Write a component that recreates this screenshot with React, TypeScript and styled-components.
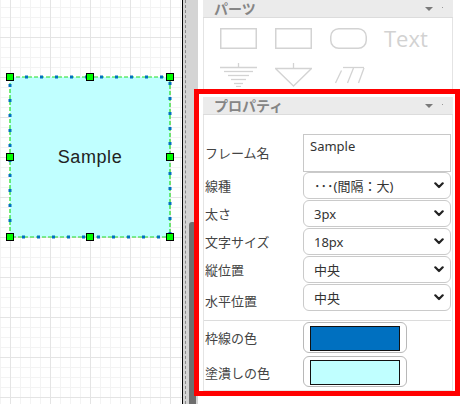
import React from "react";
import styled, { createGlobalStyle } from "styled-components";

const Global = createGlobalStyle`
  html, body { margin: 0; padding: 0; width: 465px; height: 404px; overflow: hidden; background: #fff; }
  * { box-sizing: border-box; }
`;

const Screen = styled.div`
  position: relative;
  display: flex;
  width: 465px;
  height: 404px;
  overflow: hidden;
  font-family: "Noto Sans", "Noto Sans CJK JP", sans-serif;
`;

const Canvas = styled.div`
  position: relative;
  flex: none;
  width: 183px;
  height: 100%;
  border-right: 1px solid #000;
  background-color: #fff;
  background-image:
    linear-gradient(to right, #e4e4e4 1px, transparent 1px),
    linear-gradient(to bottom, #e4e4e4 1px, transparent 1px),
    linear-gradient(to right, #f3f3f3 1px, transparent 1px),
    linear-gradient(to bottom, #f3f3f3 1px, transparent 1px);
  background-size: 40px 40px, 40px 40px, 10px 10px, 10px 10px;
  background-position: 10px 37px, 10px 37px, 0 7px, 0 7px;
`;

const Node = styled.div<{ $x: number; $y: number; $w: number; $h: number; $fill: string }>`
  position: absolute;
  left: ${(p) => p.$x}px;
  top: ${(p) => p.$y}px;
  width: ${(p) => p.$w}px;
  height: ${(p) => p.$h}px;
  background: ${(p) => p.$fill};
  display: flex;
  align-items: center;
  justify-content: center;
  font-family: "Liberation Sans", Arial, sans-serif;
  font-size: 18px;
  letter-spacing: 0.6px;
  color: #222;
`;

const NodeOutline = styled.svg`
  position: absolute;
  left: 0;
  top: 0;
  overflow: visible;
`;

const Handle = styled.div<{ $cx: number; $cy: number }>`
  position: absolute;
  left: ${(p) => p.$cx - 4}px;
  top: ${(p) => p.$cy - 4}px;
  width: 8px;
  height: 8px;
  background: #00ff00;
  border: 1px solid #000;
`;

const Splitter = styled.div`
  flex: none;
  display: flex;
  width: 15px;
  height: 100%;
  background: #d4d4d4;
`;

const DashLine = styled.div`
  width: 0;
  height: 100%;
  margin-left: 2px;
  border-left: 1px dashed #8a8a8a;
`;

const Track = styled.div`
  display: flex;
  flex-direction: column;
  width: 7px;
  margin-left: 3px;
`;

const Thumb = styled.div`
  flex: 1;
  margin-top: 222px;
  background: #6e6e6e;
  border-radius: 3px 3px 0 0;
`;

const Panel = styled.div`
  flex: 1;
  height: 100%;
  display: flex;
  flex-direction: column;
  gap: 4px;
  padding: 0 12px 0 5px;
  background: #fff;
`;

const SectionHeader = styled.div`
  position: relative;
  height: 18px;
  display: flex;
  align-items: center;
  padding-left: 11px;
  background: #ebebeb;
  border-bottom: 1px solid #dcdcdc;
  color: #858585;
  font-family: "Noto Sans CJK JP", sans-serif;
  font-size: 14px;
  font-weight: 700;
  line-height: 17px;
`;

const HeaderTitle = styled.span`
  flex: 1;
`;

const Caret = styled.span`
  width: 0;
  height: 0;
  margin-right: 9px;
  border-left: 4px solid transparent;
  border-right: 4px solid transparent;
  border-top: 4px solid #7a7a7a;
`;

const CaretDot = styled.span`
  width: 1px;
  height: 1px;
  margin-right: 10px;
  margin-bottom: 3px;
  background: #999;
`;

const PartsBody = styled.div`
  height: 75px;
  display: grid;
  grid-template-columns: repeat(4, 37px);
  grid-auto-rows: min-content;
  column-gap: 18px;
  row-gap: 14px;
  padding: 10px 0 0 16px;
  border-left: 1px solid #e4e4e4;
  border-right: 1px solid #e4e4e4;
`;

const PartText = styled.div`
  height: 21px;
  line-height: 21px;
  font-family: "Open Sans", "Noto Sans", sans-serif;
  font-size: 22px;
  color: #d2d2d2;
  white-space: nowrap;
  margin-left: -1px;
`;

const PropBody = styled.div`
  display: flex;
  flex-direction: column;
  padding: 19px 1px 3px 0;
  border-left: 1px solid #e4e4e4;
  border-right: 1px solid #e4e4e4;
  border-bottom: 1px solid #e6e6e6;
`;

const FieldRow = styled.div<{ $gap: number }>`
  display: flex;
  align-items: center;
  margin-top: ${(p) => p.$gap}px;
`;

const Label = styled.div<{ $shift?: number }>`
  width: 99px;
  flex: none;
  padding-left: 1px;
  padding-top: ${(p) => p.$shift ?? 0}px;
  font-family: "Noto Sans CJK JP", sans-serif;
  font-size: 13px;
  line-height: 16px;
  color: #444;
  white-space: nowrap;
`;

const NameArea = styled.textarea`
  display: block;
  width: 148px;
  height: 38px;
  margin: 0;
  padding: 2px 6px;
  border: 1px solid #c8c8c8;
  border-radius: 0;
  resize: none;
  outline: none;
  overflow: hidden;
  font-family: "Noto Sans", "Noto Sans CJK JP", sans-serif;
  font-size: 13px;
  line-height: 18px;
  color: #333;
  background: #fff;
`;

const SelectBox = styled.div`
  width: 148px;
  height: 27px;
  display: flex;
  align-items: center;
  justify-content: space-between;
  padding: 0 6px 0 10px;
  border: 1px solid #cacaca;
  border-radius: 6px;
  background: #fff;
  font-family: "Noto Sans", "Noto Sans CJK JP", sans-serif;
  font-size: 13px;
  line-height: 16px;
  color: #333;
  white-space: nowrap;
`;

const Divider = styled.div`
  height: 1px;
  margin-top: 9px;
  background: #dcdcdc;
`;

const ColorButton = styled.div`
  width: 104px;
  height: 31px;
  padding: 3px 0 0 6px;
  border: 1px solid #b8b8b8;
  border-radius: 6px;
  background: #fff;
`;

const Swatch = styled.div<{ $color: string }>`
  width: 90px;
  height: 25px;
  border: 1px solid #111;
  background: ${(p) => p.$color};
`;

const Highlight = styled.div`
  position: absolute;
  left: 194px;
  top: 89px;
  width: 266px;
  height: 307px;
  border: 5px solid #ff0000;
  pointer-events: none;
`;

const ICON = "#d3d3d3";

const Chevron = () => (
  <svg width="10" height="7" viewBox="0 0 10 7">
    <path d="M1.3 1.3 L5 5 L8.7 1.3" fill="none" stroke="#222" strokeWidth="2.2" strokeLinecap="round" strokeLinejoin="round" />
  </svg>
);

const RectIcon = ({ r }: { r: number }) => (
  <svg width="37" height="21" viewBox="0 0 37 21">
    <rect x="0.75" y="0.75" width="35.5" height="19.5" rx={r} fill="none" stroke={ICON} strokeWidth="1.5" />
  </svg>
);

const GroundIcon = () => (
  <svg width="37" height="24" viewBox="0 0 37 24">
    <g stroke={ICON} strokeWidth="1.3" fill="none">
      <line x1="18.5" y1="0" x2="18.5" y2="4" />
      <line x1="0" y1="4.5" x2="37" y2="4.5" />
      <line x1="4" y1="8.5" x2="33" y2="8.5" />
      <line x1="8" y1="12.5" x2="29" y2="12.5" />
      <line x1="11" y1="16.5" x2="26" y2="16.5" />
      <line x1="14" y1="20.5" x2="23" y2="20.5" />
      <line x1="16" y1="23.5" x2="21" y2="23.5" />
    </g>
  </svg>
);

const TriangleIcon = () => (
  <svg width="37" height="24" viewBox="0 0 37 24">
    <g stroke={ICON} strokeWidth="1.3" fill="none">
      <line x1="18.5" y1="0" x2="18.5" y2="5" />
      <path d="M0.5 5.5 L36.5 5.5 L18.5 23 Z" strokeLinejoin="miter" />
    </g>
  </svg>
);

const TrayIcon = () => (
  <svg width="37" height="24" viewBox="0 0 37 24">
    <g stroke={ICON} strokeWidth="1.3" fill="none">
      <line x1="13" y1="4.5" x2="34" y2="4.5" />
      <line x1="11.5" y1="7.5" x2="5.5" y2="20" />
      <line x1="23.5" y1="5" x2="17.5" y2="20" />
      <line x1="34" y1="5" x2="28.5" y2="20" />
    </g>
  </svg>
);

const handles: [number, number][] = [
  [10, 77], [90, 77], [170, 77],
  [10, 157], [170, 157],
  [10, 237], [90, 237], [170, 237],
];

const selects: { label: string; value: string; gap: number; shift?: number }[] = [
  { label: "線種", value: "･･･(間隔：大)", gap: 0 },
  { label: "太さ", value: "3px", gap: 1 },
  { label: "文字サイズ", value: "18px", gap: 1 },
  { label: "縦位置", value: "中央", gap: 1 },
  { label: "水平位置", value: "中央", gap: 1, shift: 6 },
];

export default function App() {
  return (
    <>
      <Global />
      <Screen>
        <Canvas>
          <Node $x={10} $y={77} $w={160} $h={160} $fill="#c0ffff">
            <NodeOutline width="160" height="160">
              <rect x="0" y="0" width="160" height="160" fill="none" stroke="#22e022" strokeWidth="1.2" strokeDasharray="4 2" />
              <rect x="0" y="0" width="160" height="160" fill="none" stroke="#0070c0" strokeWidth="3" strokeDasharray="3 12" />
            </NodeOutline>
            Sample
          </Node>
          {handles.map(([x, y]) => (
            <Handle key={`${x}-${y}`} $cx={x} $cy={y} />
          ))}
        </Canvas>
        <Splitter>
          <DashLine />
          <Track>
            <Thumb />
          </Track>
        </Splitter>
        <Panel>
          <div>
            <SectionHeader>
              <HeaderTitle>パーツ</HeaderTitle>
              <Caret />
              <CaretDot />
            </SectionHeader>
            <PartsBody>
              <RectIcon r={0} />
              <RectIcon r={0} />
              <RectIcon r={8} />
              <PartText>Text</PartText>
              <GroundIcon />
              <TriangleIcon />
              <TrayIcon />
            </PartsBody>
          </div>
          <div>
            <SectionHeader>
              <HeaderTitle>プロパティ</HeaderTitle>
              <Caret />
              <CaretDot />
            </SectionHeader>
            <PropBody>
              <FieldRow $gap={0}>
                <Label>フレーム名</Label>
                <NameArea defaultValue="Sample" readOnly />
              </FieldRow>
              {selects.map((s) => (
                <FieldRow key={s.label} $gap={s.gap}>
                  <Label $shift={s.shift}>{s.label}</Label>
                  <SelectBox>
                    <span>{s.value}</span>
                    <Chevron />
                  </SelectBox>
                </FieldRow>
              ))}
              <Divider />
              <FieldRow $gap={1}>
                <Label>枠線の色</Label>
                <ColorButton>
                  <Swatch $color="#0070c0" />
                </ColorButton>
              </FieldRow>
              <FieldRow $gap={3}>
                <Label $shift={2}>塗潰しの色</Label>
                <ColorButton>
                  <Swatch $color="#c0ffff" />
                </ColorButton>
              </FieldRow>
            </PropBody>
          </div>
        </Panel>
        <Highlight />
      </Screen>
    </>
  );
}
